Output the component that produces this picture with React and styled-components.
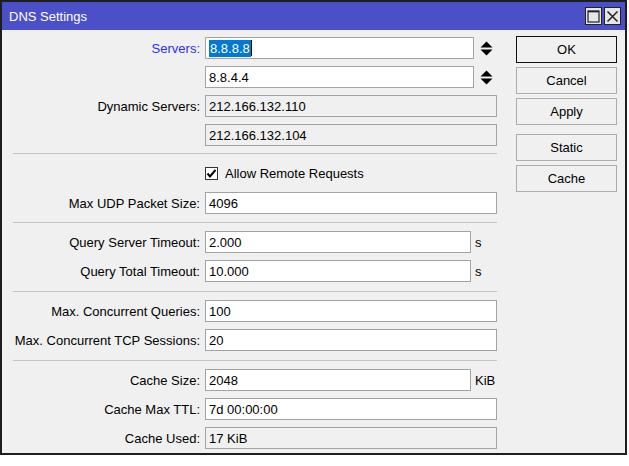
import React from "react";
import styled, { createGlobalStyle } from "styled-components";

const GlobalStyle = createGlobalStyle`
  html, body { margin: 0; padding: 0; background: #ffffff; }
  body {
    font-family: "Liberation Sans", Arial, sans-serif;
    font-size: 13px;
    color: #000;
  }
  * { box-sizing: border-box; }
`;

const Window = styled.div`
  width: 627px;
  border: 2px solid #1e1e1e;
  background: #f0f0f0;
`;

const TitleBar = styled.div`
  height: 28px;
  background: #4c50c8;
  display: flex;
  align-items: center;
  padding: 0 4px 0 7px;
  color: #fff;
`;

const TitleText = styled.div`
  flex: 1;
  font-size: 13px;
  padding-top: 1px;
`;

const TitleButtons = styled.div`
  display: flex;
  gap: 2px;
`;

const TitleButton = styled.div`
  width: 17px;
  height: 18px;
  border: 1px solid #222;
  background: #e6e6e6;
  display: flex;
  align-items: center;
  justify-content: center;
`;

const Body = styled.div`
  display: flex;
  padding: 0 8px 0 11px;
  gap: 19px;
`;

const Form = styled.div`
  width: 484px;
  display: flex;
  flex-direction: column;
`;

const Section = styled.div`
  display: flex;
  flex-direction: column;
  gap: 7px;
  padding: ${(p) => p.$pad || "8px 0 9px"};
`;

const Separator = styled.div`
  height: 1px;
  background: #c4c4c4;
`;

const Row = styled.div`
  display: grid;
  grid-template-columns: 187px 1fr;
  column-gap: 5px;
  align-items: center;
  height: ${(p) => p.$h || 22}px;
`;

const Label = styled.div`
  text-align: right;
  white-space: nowrap;
  color: ${(p) => (p.$accent ? "#2e2eff" : "#000")};
`;

const Field = styled.div`
  display: flex;
  align-items: center;
`;

const Input = styled.div`
  width: ${(p) => p.$w || 292}px;
  height: 22px;
  border: 1px solid #a3a3a3;
  background: ${(p) => (p.$readOnly ? "#f0f0f0" : "#ffffff")};
  padding: 0 3px;
  display: flex;
  align-items: center;
  white-space: nowrap;
  overflow: hidden;
`;

const Selected = styled.span`
  background: #0078d7;
  color: #fff;
  line-height: 17px;
  padding: 0 1px;
`;

const Caret = styled.span`
  display: inline-block;
  width: 1px;
  height: 16px;
  background: #000;
`;

const Unit = styled.span`
  margin-left: 4px;
`;

const Spinner = styled.svg`
  margin-left: 6px;
`;

const CheckRow = styled.label`
  display: flex;
  align-items: center;
  gap: 7px;
`;

const CheckBox = styled.span`
  width: 13px;
  height: 13px;
  border: 1px solid #333;
  background: #fff;
  display: flex;
  align-items: center;
  justify-content: center;
`;

const ButtonColumn = styled.div`
  width: 101px;
  padding-top: 6px;
  display: flex;
  flex-direction: column;
  gap: 4px;
`;

const Button = styled.div`
  height: 27px;
  border: 1px solid ${(p) => (p.$default ? "#111" : "#adadad")};
  background: #f0f0f0;
  display: flex;
  align-items: center;
  justify-content: center;
  margin-top: ${(p) => (p.$spaced ? 5 : 0)}px;
`;

const SpinIcon = () => (
  <Spinner width="13" height="15" viewBox="0 0 13 15">
    <polygon points="6.5,0.5 12.5,6.5 0.5,6.5" fill="#000" />
    <polygon points="0.5,8.5 12.5,8.5 6.5,14.5" fill="#000" />
  </Spinner>
);

const TextRow = ({ label, value, width, unit, readOnly, accent, spin, children }) => (
  <Row>
    <Label $accent={accent}>{label}</Label>
    <Field>
      <Input $w={width} $readOnly={readOnly}>
        {children || value}
      </Input>
      {unit && <Unit>{unit}</Unit>}
      {spin && <SpinIcon />}
    </Field>
  </Row>
);

export default function App() {
  return (
    <>
      <GlobalStyle />
      <Window>
        <TitleBar>
          <TitleText>DNS Settings</TitleText>
          <TitleButtons>
            <TitleButton>
              <svg width="13" height="13" viewBox="0 0 13 13">
                <rect x="1" y="1" width="11" height="11" fill="none" stroke="#222" strokeWidth="1.2" />
                <line x1="1" y1="1.6" x2="12" y2="1.6" stroke="#222" strokeWidth="1.5" />
              </svg>
            </TitleButton>
            <TitleButton>
              <svg width="13" height="13" viewBox="0 0 13 13">
                <path d="M1.5 1.5 L11.5 11.5 M11.5 1.5 L1.5 11.5" stroke="#222" strokeWidth="1.5" />
              </svg>
            </TitleButton>
          </TitleButtons>
        </TitleBar>
        <Body>
          <Form>
            <Section $pad="7px 0 7px">
              <TextRow label="Servers:" accent width={269} spin>
                <Selected>8.8.8.8</Selected>
                <Caret />
              </TextRow>
              <TextRow label="" value="8.8.4.4" width={269} spin />
              <TextRow label="Dynamic Servers:" value="212.166.132.110" readOnly />
              <TextRow label="" value="212.166.132.104" readOnly />
            </Section>
            <Separator />
            <Section $pad="8px 0 8px">
              <Row $h={23}>
                <Label />
                <CheckRow>
                  <CheckBox>
                    <svg width="11" height="11" viewBox="0 0 11 11">
                      <path d="M1.5 5.5 L4 8.5 L9.5 2" fill="none" stroke="#000" strokeWidth="2" />
                    </svg>
                  </CheckBox>
                  Allow Remote Requests
                </CheckRow>
              </Row>
              <TextRow label="Max UDP Packet Size:" value="4096" />
            </Section>
            <Separator />
            <Section>
              <TextRow label="Query Server Timeout:" value="2.000" width={266} unit="s" />
              <TextRow label="Query Total Timeout:" value="10.000" width={266} unit="s" />
            </Section>
            <Separator />
            <Section>
              <TextRow label="Max. Concurrent Queries:" value="100" />
              <TextRow label="Max. Concurrent TCP Sessions:" value="20" />
            </Section>
            <Separator />
            <Section $pad="8px 0 4px">
              <TextRow label="Cache Size:" value="2048" width={266} unit="KiB" />
              <TextRow label="Cache Max TTL:" value="7d 00:00:00" />
              <TextRow label="Cache Used:" value="17 KiB" readOnly />
            </Section>
          </Form>
          <ButtonColumn>
            <Button $default>OK</Button>
            <Button>Cancel</Button>
            <Button>Apply</Button>
            <Button $spaced>Static</Button>
            <Button>Cache</Button>
          </ButtonColumn>
        </Body>
      </Window>
    </>
  );
}
